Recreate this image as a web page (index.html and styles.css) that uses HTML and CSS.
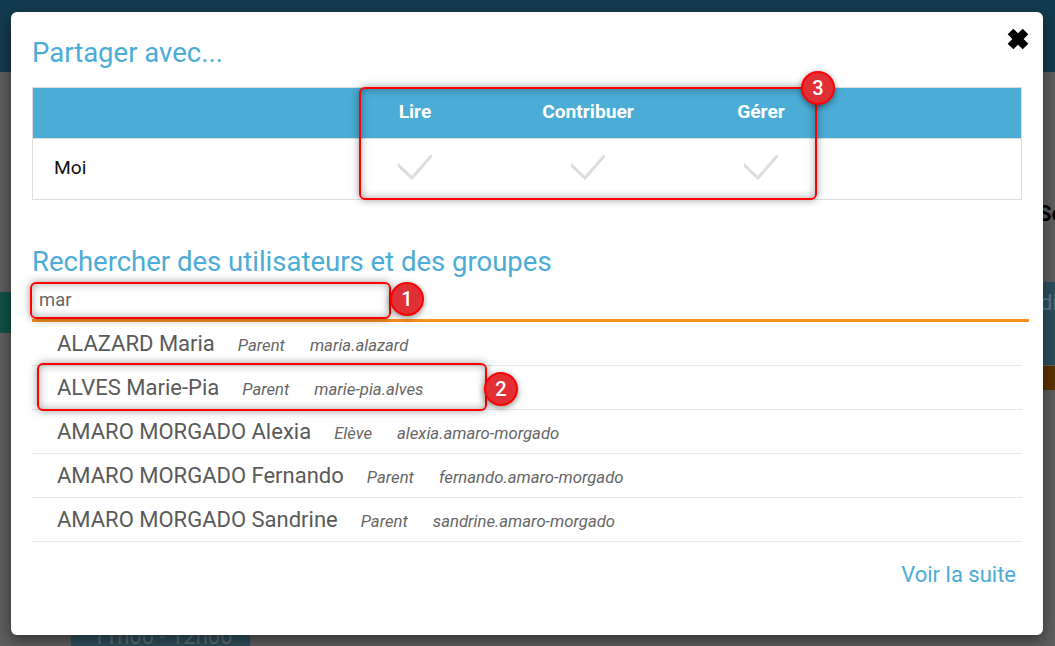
FILE: index.html
```html
<!DOCTYPE html>
<html lang="fr">
<head>
<meta charset="utf-8">
<title>Partager avec...</title>
<link rel="stylesheet" href="styles.css">
</head>
<body>
<div class="page">
  <div class="bg-header"></div>
  <div class="bg-green"></div>
  <div class="bg-blue"><span class="bg-blue-text">di</span></div>
  <div class="bg-orange"></div>
  <div class="bg-se">Se</div>
  <div class="bg-slot">11h00 - 12h00</div>

  <main class="modal">
    <svg class="close" viewBox="0 0 22 22" aria-label="Fermer"><path d="M3.5 3.5 18.5 18.5M18.5 3.5 3.5 18.5"/></svg>
    <h2 class="title">Partager avec...</h2>
    <div class="rights">
      <div class="rights-head">
        <div></div><div class="col">Lire</div><div class="col">Contribuer</div><div class="col">Gérer</div><div></div>
      </div>
      <div class="rights-row">
        <div class="who">Moi</div>
        <div class="cell"><svg class="check" viewBox="0 0 34 25"><rect class="check-dot" width="1" height="1"/><path d="M-3 7 14 23 34 0"/></svg></div>
        <div class="cell"><svg class="check" viewBox="0 0 34 25"><rect class="check-dot" width="1" height="1"/><path d="M-3 7 14 23 34 0"/></svg></div>
        <div class="cell"><svg class="check" viewBox="0 0 34 25"><rect class="check-dot" width="1" height="1"/><path d="M-3 7 14 23 34 0"/></svg></div>
        <div></div>
      </div>
    </div>
    <h2 class="title title-search">Rechercher des utilisateurs et des groupes</h2>
    <div class="search">mar</div>
    <ul class="results">
      <li><span class="name">ALAZARD Maria</span><em>Parent</em><em>maria.alazard</em></li>
      <li><span class="name">ALVES Marie-Pia</span><em>Parent</em><em>marie-pia.alves</em></li>
      <li><span class="name">AMARO MORGADO Alexia</span><em>Elève</em><em>alexia.amaro-morgado</em></li>
      <li><span class="name">AMARO MORGADO Fernando</span><em>Parent</em><em>fernando.amaro-morgado</em></li>
      <li><span class="name">AMARO MORGADO Sandrine</span><em>Parent</em><em>sandrine.amaro-morgado</em></li>
    </ul>
    <div class="more"><a>Voir la suite</a></div>
  </main>

  <div class="mark mark-1"></div>
  <div class="mark mark-2"></div>
  <div class="mark mark-3"></div>
  <div class="badge badge-1">1</div>
  <div class="badge badge-2">2</div>
  <div class="badge badge-3">3</div>
</div>
</body>
</html>
```
FILE: styles.css
```css
* { box-sizing: border-box; }
html, body { margin: 0; padding: 0; }
body { font-family: Roboto, "Liberation Sans", sans-serif; }

.page {
  position: relative;
  width: 1055px;
  height: 646px;
  overflow: hidden;
  background: #5f5f5f;
  padding: 12px 12px 11px 11px;
}

.bg-header { position: absolute; left: 0; top: 0; width: 100%; height: 72px; background: #143c50; }
.bg-green { position: absolute; left: 0; top: 292px; width: 11px; height: 41px; background: #115048; }
.bg-blue { position: absolute; left: 1043px; top: 282px; width: 12px; height: 83px; background: #2c505e; overflow: hidden; }
.bg-blue-text { position: absolute; left: -3px; top: 8px; font-size: 22px; color: #5c7a87; }
.bg-orange { position: absolute; left: 1043px; top: 366px; width: 12px; height: 24px; background: #5c3300; }
.bg-se { position: absolute; left: 1038px; top: 201px; font-size: 22px; font-weight: 700; color: #000; }
.bg-slot { position: absolute; left: 71px; top: 625px; width: 179px; height: 21px; padding-left: 4px; background: #2e505e; color: #5f6f78; font-size: 22px; line-height: 24px; text-align: center; }

.modal {
  position: relative;
  width: 1032px;
  height: 623px;
  background: #fff;
  border-radius: 6px;
  box-shadow: 0 5px 15px rgba(0, 0, 0, .5);
  padding: 23px 21px 0;
}

.close {
  position: absolute;
  right: 14px;
  top: 16px;
  width: 22px;
  height: 22px;
}
.close path { fill: none; stroke: #000; stroke-width: 8; }

.title {
  margin: 0;
  font-size: 27.5px;
  font-weight: 400;
  line-height: 36px;
  color: #4bacd6;
}

.rights {
  margin-top: 16px;
  height: 113px;
  border: 1px solid #ddd;
}
.rights-head, .rights-row {
  display: grid;
  grid-template-columns: 295.5px 173px 173px 173px 1fr;
  align-items: center;
  justify-items: center;
}
.rights-head {
  height: 51px;
  padding-bottom: 3px;
  background: #4bacd6;
  border-bottom: 1px solid #ddd;
  color: #fff;
  font-size: 19.2px;
  font-weight: 700;
  text-align: center;
}
.rights-row { height: 60px; padding-bottom: 4px; }
.who { justify-self: start; padding-left: 21px; font-size: 19.2px; color: #111; }
.cell { display: flex; align-items: flex-start; }
.check { display: block; width: 34px; height: 25px; }
.check path { fill: none; stroke: #ddd; stroke-width: 3; }
.check-dot { fill: #e8e8e8; }

.title-search { margin-top: 44px; }

.search {
  height: 38px;
  margin-right: -7px;
  margin-top: 4px;
  padding-left: 7px;
  border-bottom: 3px solid #f7901e;
  font-size: 18.4px;
  line-height: 32px;
  color: #666;
}

.results { list-style: none; margin: 0; padding: 0; }
.results li {
  display: flex;
  align-items: baseline;
  gap: 24px;
  height: 44px;
  padding-left: 25px;
  border-bottom: 1px solid #e5e5e5;
  line-height: 43px;
  color: #5a5a5a;
}
.name { font-size: 22px; margin-right: -1px; }
.results em { font-size: 16.7px; font-style: italic; color: #666; }
.results em + em { margin-left: 1px; }

.more { margin-top: 20px; padding-right: 6px; text-align: right; }
.more a { font-size: 22px; color: #4bacd6; }

.mark {
  position: absolute;
  border: 2px solid #f00;
  border-radius: 6px;
  box-shadow: 0 0 8px rgba(0, 0, 0, .4), inset 0 0 8px rgba(0, 0, 0, .35);
}
.mark-1 { left: 30px; top: 282px; width: 361px; height: 37px; }
.mark-2 { left: 37px; top: 363px; width: 450px; height: 48px; }
.mark-3 { left: 359px; top: 87px; width: 458px; height: 113px; }

.badge {
  position: absolute;
  width: 34px;
  height: 34px;
  border: 2px solid #f00;
  border-radius: 50%;
  background: #e03036;
  box-shadow: 0 2px 6px rgba(0, 0, 0, .45);
  color: #fff;
  font-size: 20px;
  font-weight: 500;
  line-height: 30px;
  text-align: center;
}
.badge-1 { left: 390px; top: 282px; }
.badge-2 { left: 484px; top: 372px; }
.badge-3 { left: 801px; top: 71px; }
```
